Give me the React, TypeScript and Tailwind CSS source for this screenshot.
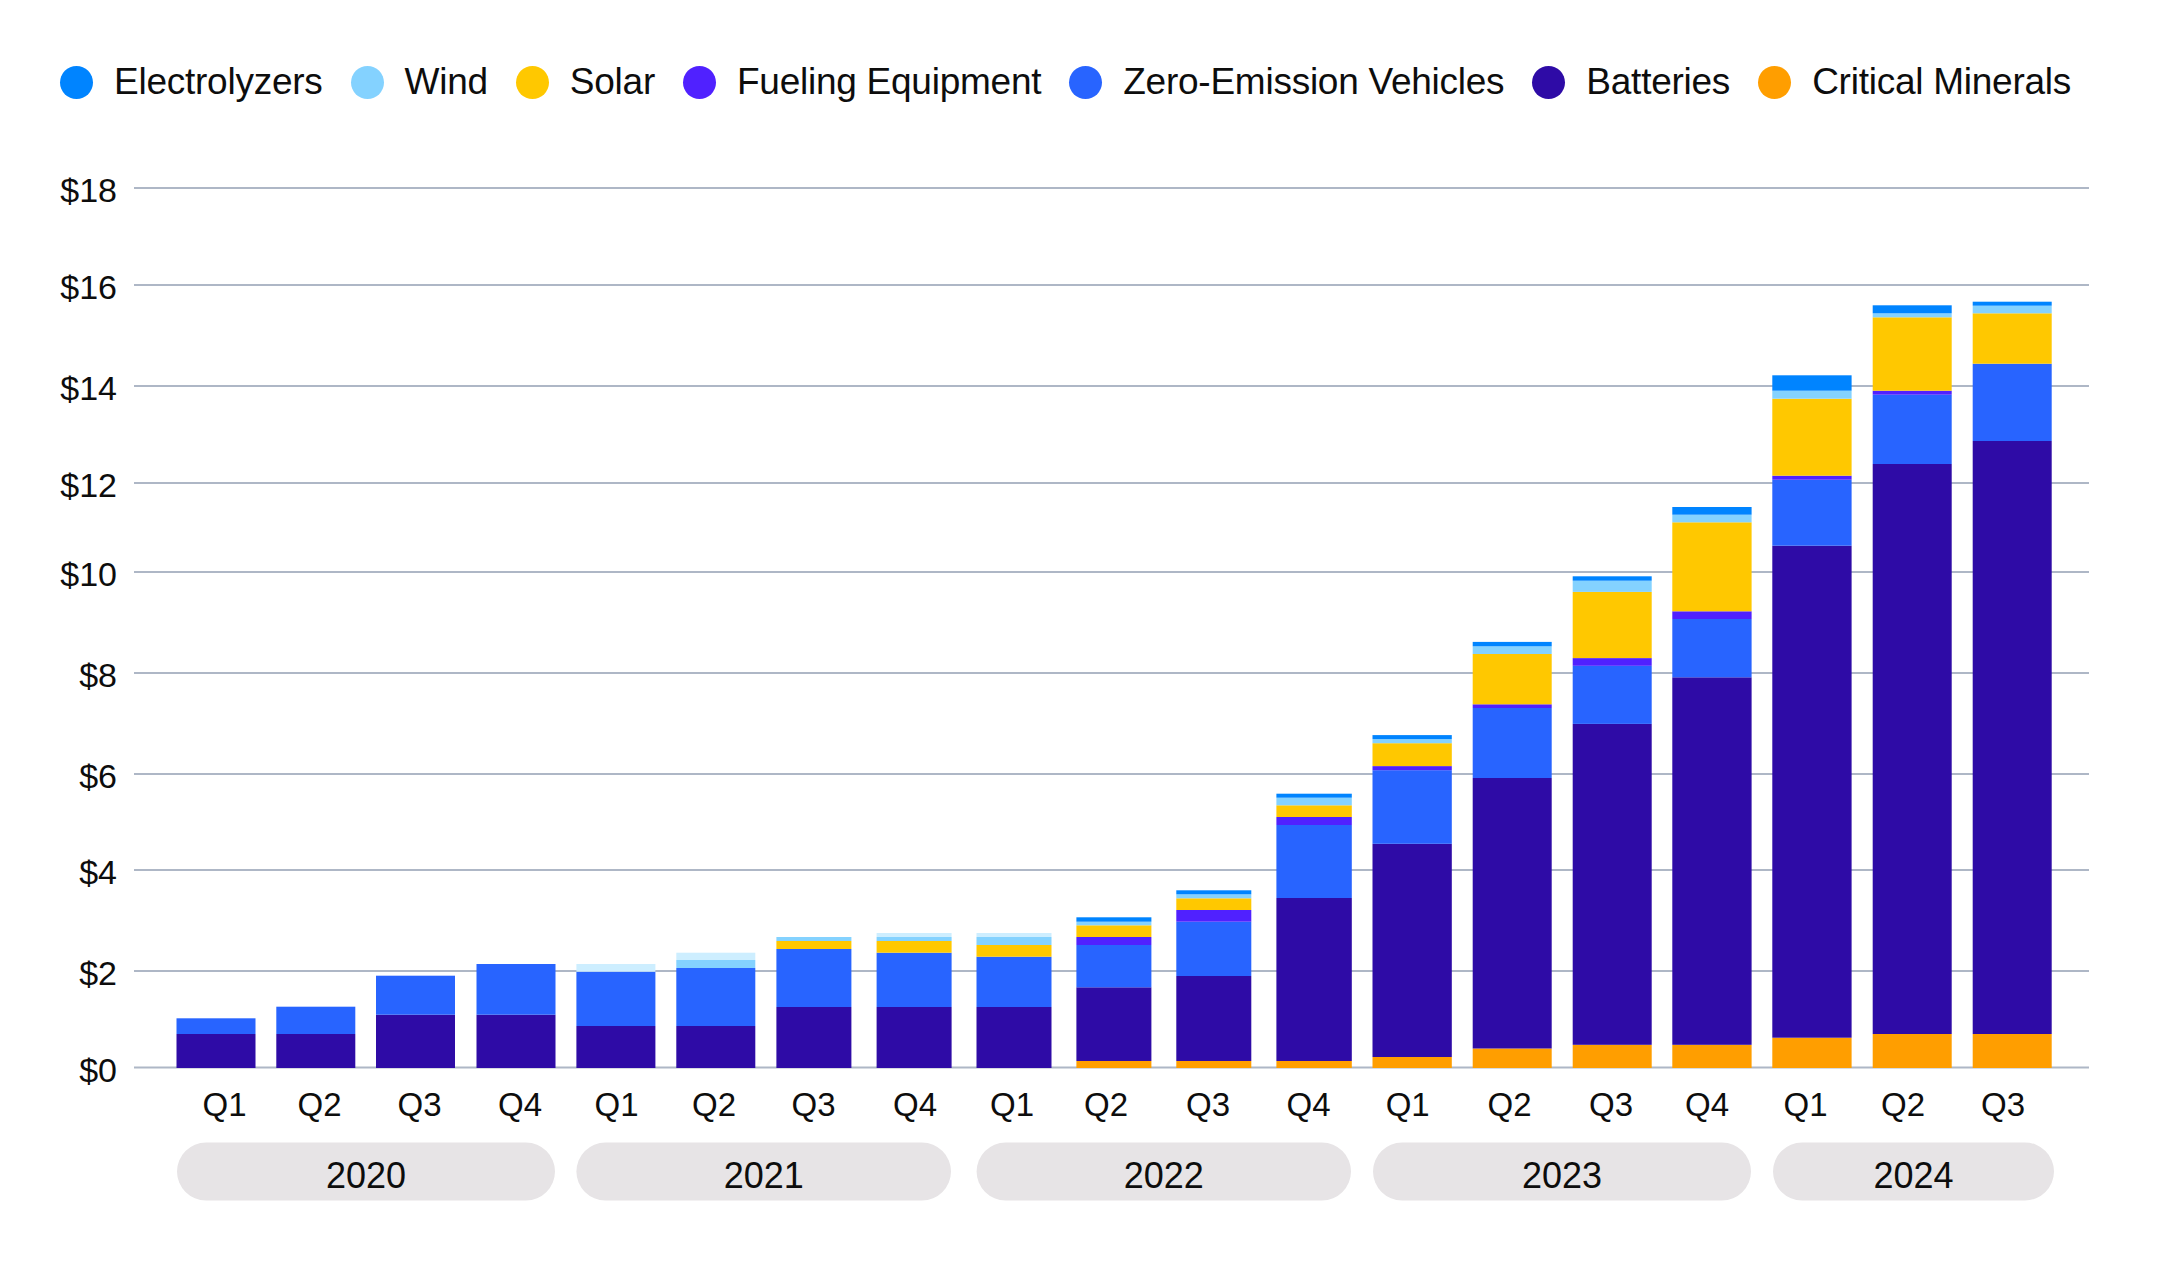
import React from "react";

const E = "#0084ff";
const W = "#84d2ff";
const S = "#ffc800";
const F = "#5021ff";
const Z = "#2864ff";
const B = "#2e0ba6";
const C = "#ff9e00";
const P = "#cdeeff";

const legend = [
  { label: "Electrolyzers", dot: "bg-[#0084ff]" },
  { label: "Wind", dot: "bg-[#84d2ff]" },
  { label: "Solar", dot: "bg-[#ffc800]" },
  { label: "Fueling Equipment", dot: "bg-[#5021ff]" },
  { label: "Zero-Emission Vehicles", dot: "bg-[#2864ff]" },
  { label: "Batteries", dot: "bg-[#2e0ba6]" },
  { label: "Critical Minerals", dot: "bg-[#ff9e00]" },
];

// gridlines measured in page pixels, $18 down to $0
const grid = [
  { v: "$18", y: 188 },
  { v: "$16", y: 285 },
  { v: "$14", y: 386 },
  { v: "$12", y: 483 },
  { v: "$10", y: 572 },
  { v: "$8", y: 673 },
  { v: "$6", y: 774 },
  { v: "$4", y: 870 },
  { v: "$2", y: 971 },
  { v: "$0", y: 1067.5 },
];

const BASE = 1068;

// each bar: left, width, segments bottom -> top as [topY, colour]
const bars: { x: number; w: number; seg: [number, string][] }[] = [
  { x: 176.5, w: 79, seg: [[1034, B], [1018.3, Z]] },
  { x: 276.3, w: 79, seg: [[1034, B], [1006.7, Z]] },
  { x: 376, w: 79, seg: [[1014.7, B], [975.7, Z]] },
  { x: 476.5, w: 79, seg: [[1014.7, B], [964, Z]] },
  { x: 576.4, w: 79, seg: [[1026, B], [971.7, Z], [964, P]] },
  { x: 676.3, w: 79, seg: [[1026, B], [968, Z], [960, W], [952.7, P]] },
  { x: 776.4, w: 75, seg: [[1007, B], [949, Z], [941, S], [937, W]] },
  { x: 876.6, w: 75, seg: [[1007, B], [952.7, Z], [941, S], [937, W], [933, P]] },
  { x: 976.5, w: 75, seg: [[1007, B], [956.7, Z], [945, S], [937, W], [933, P]] },
  { x: 1076.4, w: 75, seg: [[1061, C], [987.3, B], [945, Z], [937, F], [925.3, S], [921.7, W], [917.3, E]] },
  { x: 1176.3, w: 75, seg: [[1061, C], [976, B], [921.7, Z], [910, F], [898.3, S], [894.3, W], [890.3, E]] },
  { x: 1276.4, w: 75.4, seg: [[1061, C], [898, B], [825, Z], [817, F], [805.3, S], [797.7, W], [793.7, E]] },
  { x: 1372.5, w: 79.3, seg: [[1057, C], [843.8, B], [770.2, Z], [766.1, F], [743.2, S], [739.1, W], [735.1, E]] },
  { x: 1472.7, w: 79, seg: [[1048.5, C], [778, B], [708, Z], [704.3, F], [654, S], [646.3, W], [641.9, E]] },
  { x: 1572.7, w: 79, seg: [[1044.8, C], [723.9, B], [665.8, Z], [658.1, F], [591.9, S], [580.7, W], [576.3, E]] },
  { x: 1672.3, w: 79.3, seg: [[1044.8, C], [677.3, B], [619, Z], [611.3, F], [522.3, S], [514.7, W], [507, E]] },
  { x: 1772.3, w: 79.3, seg: [[1037.7, C], [545.7, B], [479.7, Z], [475.7, F], [398.7, S], [390.7, W], [375.3, E]] },
  { x: 1872.7, w: 79, seg: [[1034, C], [464, B], [394.7, Z], [390.7, F], [317.3, S], [313.3, W], [305.3, E]] },
  { x: 1972.7, w: 79, seg: [[1034, C], [441, B], [363.7, Z], [313.3, S], [305.7, W], [301.7, E]] },
];

const quarters = [
  { q: "Q1", x: 224.5 },
  { q: "Q2", x: 319.5 },
  { q: "Q3", x: 419.6 },
  { q: "Q4", x: 520 },
  { q: "Q1", x: 616.5 },
  { q: "Q2", x: 714 },
  { q: "Q3", x: 813.5 },
  { q: "Q4", x: 915 },
  { q: "Q1", x: 1012 },
  { q: "Q2", x: 1106 },
  { q: "Q3", x: 1208 },
  { q: "Q4", x: 1308.6 },
  { q: "Q1", x: 1407.7 },
  { q: "Q2", x: 1509.6 },
  { q: "Q3", x: 1611 },
  { q: "Q4", x: 1707 },
  { q: "Q1", x: 1805.5 },
  { q: "Q2", x: 1903 },
  { q: "Q3", x: 2003 },
];

const years = [
  { y: "2020", x1: 177, x2: 555 },
  { y: "2021", x1: 576.4, x2: 951 },
  { y: "2022", x1: 976.6, x2: 1351 },
  { y: "2023", x1: 1373, x2: 1751 },
  { y: "2024", x1: 1773, x2: 2054 },
];

const font = '"Liberation Sans", Arial, sans-serif';

function Legend() {
  return (
    <div className="flex h-[140px] items-start pl-[60px] pt-[60px]">
      {legend.map((l) => (
        <div key={l.label} className="mr-[28px] flex h-[44px] items-center gap-[21px]">
          <span className={`h-[33px] w-[33px] shrink-0 rounded-full ${l.dot}`} />
          <span className="whitespace-nowrap text-[37px] leading-[44px] tracking-[-0.25px] text-[#0d0d0d]">
            {l.label}
          </span>
        </div>
      ))}
    </div>
  );
}

function Chart() {
  return (
    <svg
      width={2160}
      height={1127}
      viewBox="0 140 2160 1127"
      className="block"
      style={{ fontFamily: font }}
    >
      {grid.map((g) => (
        <g key={g.v}>
          <line x1={134} x2={2089} y1={g.y} y2={g.y} stroke="#aeb7c6" strokeWidth={2} />
          <text x={117} y={g.y + 14} textAnchor="end" fontSize={34} fill="#0d0d0d">
            {g.v}
          </text>
        </g>
      ))}

      {bars.map((b, i) => {
        let bottom = BASE;
        return (
          <g key={i}>
            {b.seg.map(([top, color], j) => {
              const r = (
                <rect key={j} x={b.x} y={top} width={b.w} height={bottom - top} fill={color} />
              );
              bottom = top;
              return r;
            })}
          </g>
        );
      })}

      {quarters.map((q, i) => (
        <text key={i} x={q.x} y={1116} textAnchor="middle" fontSize={33} fill="#0d0d0d">
          {q.q}
        </text>
      ))}

      {years.map((y) => (
        <g key={y.y}>
          <rect x={y.x1} y={1142.5} width={y.x2 - y.x1} height={58} rx={29} fill="#e7e4e6" />
          <text x={(y.x1 + y.x2) / 2} y={1188} textAnchor="middle" fontSize={36} fill="#0d0d0d">
            {y.y}
          </text>
        </g>
      ))}
    </svg>
  );
}

export default function App() {
  return (
    <div
      className="h-[1267px] w-[2160px] overflow-hidden bg-white"
      style={{ fontFamily: font }}
    >
      <Legend />
      <Chart />
    </div>
  );
}
